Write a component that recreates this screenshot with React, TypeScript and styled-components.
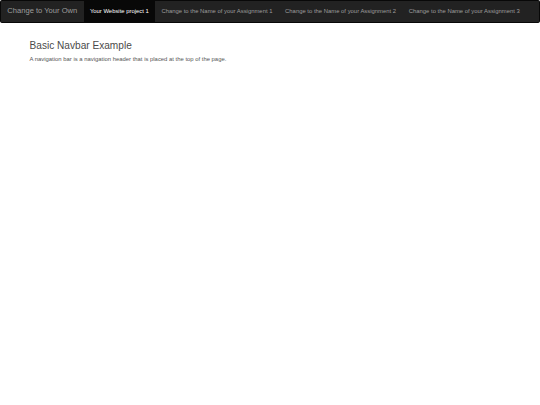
import styled, { createGlobalStyle } from 'styled-components';

// the shot is a 1280px wide page scaled down to 540px
const S = 540 / 1280;
const px = (n: number) => `${(n * S).toFixed(3)}px`;

const links = [
  'Your Website project 1',
  'Change to the Name of your Assignment 1',
  'Change to the Name of your Assignment 2',
  'Change to the Name of your Assignment 3',
];

const GlobalStyle = createGlobalStyle`
  html, body {
    margin: 0;
    padding: 0;
    background: #fff;
  }

  body {
    font-family: "Liberation Sans", Arial, Helvetica, sans-serif;
    font-size: ${px(14)};
    line-height: 1.42857143;
    color: #555;
  }
`;

const App = () => {
  return (
    <>
      <GlobalStyle />
      <Navbar>
        <Brand href="#">Change to Your Own</Brand>
        <NavList>
          {links.map((label, i) => (
            <NavItem key={label}>
              <NavLink href="#" $active={i === 0}>
                {label}
              </NavLink>
            </NavItem>
          ))}
        </NavList>
      </Navbar>
      <Container>
        <Title>Basic Navbar Example</Title>
        <Text>A navigation bar is a navigation header that is placed at the top of the page.</Text>
      </Container>
    </>
  );
};

export default App;

const Navbar = styled.nav`
  display: flex;
  align-items: stretch;

  min-height: ${px(50)};
  margin-bottom: ${px(20)};

  background-color: #222;
  border: 1px solid #080808;
  border-radius: ${px(4)};
`;

const Brand = styled.a`
  display: block;

  height: ${px(50)};
  padding: ${px(15)};
  box-sizing: border-box;

  font-size: ${px(18)};
  line-height: ${px(20)};
  color: #9d9d9d;
  text-decoration: none;
`;

const NavList = styled.ul`
  display: flex;

  margin: 0;
  padding: 0;

  list-style: none;
`;

const NavItem = styled.li`
  display: block;
`;

const NavLink = styled.a<{ $active?: boolean }>`
  display: block;

  padding: ${px(15)};

  line-height: ${px(20)};
  white-space: nowrap;
  color: ${({ $active }) => ($active ? '#fff' : '#9d9d9d')};
  text-decoration: none;

  background-color: ${({ $active }) => ($active ? '#080808' : 'transparent')};
`;

const Container = styled.div`
  width: ${px(1170)};
  margin: 0 auto;
  padding: 0 ${px(15)};
  box-sizing: border-box;

  &::before {
    content: ' ';
    display: table;
  }
`;

const Title = styled.h3`
  margin: ${px(20)} 0 ${px(10)};

  font-size: ${px(24)};
  font-weight: 500;
  line-height: 1.1;
  color: #4a4a4a;
`;

const Text = styled.p`
  margin: 0 0 ${px(10)};
`;
